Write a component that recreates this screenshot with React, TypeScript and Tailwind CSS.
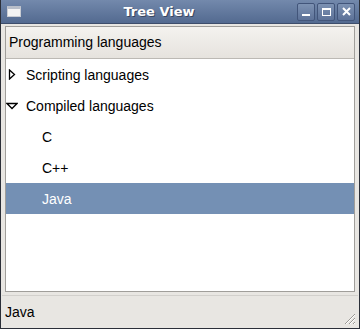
import React from "react";

const font = { fontFamily: '"Liberation Sans", "DejaVu Sans", sans-serif' };

function Row({ label, indent, arrow, selected }: { label: string; indent: number; arrow?: "right" | "down"; selected?: boolean }) {
  return (
    <div className={`h-[31px] flex items-center ${selected ? "bg-[#7490b4] text-white" : "text-black"}`}>
      <div className="w-[20px] flex items-center justify-start">
        {arrow === "right" && (
          <svg className="ml-[2px]" width="8" height="11" viewBox="0 0 8 11">
            <path d="M1.5 1 L6.5 5.5 L1.5 10 Z" fill="none" stroke="#000" strokeWidth="1.3" />
          </svg>
        )}
        {arrow === "down" && (
          <svg className="ml-[0px]" width="12" height="8" viewBox="0 0 12 8">
            <path d="M1 1.5 L11 1.5 L6 6.5 Z" fill="none" stroke="#000" strokeWidth="1.3" />
          </svg>
        )}
      </div>
      <span style={{ marginLeft: indent }} className="text-[14px] leading-none">{label}</span>
    </div>
  );
}

export default function App() {
  return (
    <div className="w-[360px] h-[329px] flex flex-col bg-[#e8e6e2] border border-[#2b2f38] border-t-0" style={font}>
      {/* Title bar */}
      <div className="h-[24px] flex items-center bg-gradient-to-b from-[#7389ac] to-[#536a90] border-b border-[#3d4d6b]">
        <div className="ml-[6px] w-[14px] h-[11px] bg-[#f3f3f3] border border-[#c9ccd3] border-t-[3px] border-t-[#b8bec9]" />
        <div
          className="flex-1 text-center text-white font-bold text-[13px]"
          style={{ fontFamily: '"DejaVu Sans", sans-serif', textShadow: "1px 1px 0 #3a4660" }}
        >
          Tree View
        </div>
        <div className="mr-[4px] flex gap-[2px]">
          {["min", "max", "close"].map((k) => (
            <div key={k} className="w-[18px] h-[18px] rounded-[2px] border border-[#42557a] bg-gradient-to-b from-[#7d92b3] to-[#5d7298] flex items-center justify-center">
              {k === "min" && <div className="w-[8px] h-[2px] bg-white mt-[7px]" />}
              {k === "max" && <div className="w-[9px] h-[8px] border border-white border-t-2" />}
              {k === "close" && (
                <svg width="9" height="9" viewBox="0 0 9 9">
                  <path d="M1 1 L8 8 M8 1 L1 8" stroke="white" strokeWidth="2" />
                </svg>
              )}
            </div>
          ))}
        </div>
      </div>
      {/* Body */}
      <div className="flex-1 flex flex-col px-[4px] pt-[2px]">
        <div className="h-[266px] border border-[#a09e9a] bg-white flex flex-col">
          <div className="h-[32px] flex items-center pl-[3px] bg-gradient-to-b from-[#f4f2ef] to-[#e6e3de] border-b border-[#bcb9b4] text-[14px] text-black">
            Programming languages
          </div>
          <Row label="Scripting languages" indent={0} arrow="right" />
          <Row label="Compiled languages" indent={0} arrow="down" />
          <Row label="C" indent={16} />
          <Row label="C++" indent={16} />
          <Row label="Java" indent={16} selected />
        </div>
        <div className="mt-[3px] h-[32px] border-t border-[#d2d0cc] flex items-center relative -mx-[3px] px-[3px] pt-[2px]">
          <span className="text-[14px] text-black">Java</span>
          <svg className="absolute right-[2px] bottom-[2px]" width="14" height="14" viewBox="0 0 14 14">
            <path d="M13 3 L3 13 M13 7 L7 13 M13 11 L11 13" stroke="#9a9893" strokeWidth="1" />
            <path d="M13 4 L4 13 M13 8 L8 13 M13 12 L12 13" stroke="#ffffff" strokeWidth="1" />
          </svg>
        </div>
      </div>
    </div>
  );
}
